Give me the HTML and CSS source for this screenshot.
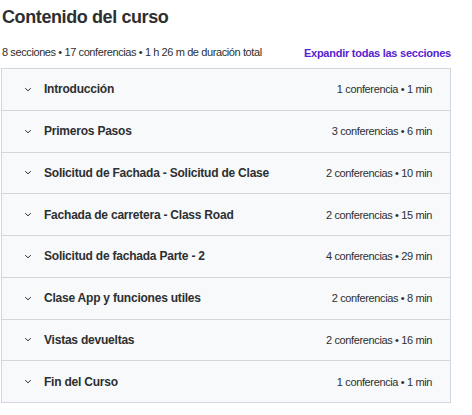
FILE: index.html
```html
<!DOCTYPE html>
<html lang="es">
<head>
<meta charset="utf-8">
<link rel="stylesheet" href="styles.css">
</head>
<body>
<div class="page">
  <h2 class="title">Contenido del curso</h2>
  <div class="meta-row">
    <span class="meta">8 secciones • 17 conferencias • 1 h 26 m de duración total</span>
    <span class="expand">Expandir todas las secciones</span>
  </div>
  <div class="sections">
    <div class="section"><span class="chev"><svg width="8" height="5" viewBox="0 0 8 5"><path d="M1.2 1.2l2.8 2.6 2.8-2.6" fill="none" stroke="#2d2f31" stroke-width="1"/></svg></span><span class="name">Introducción</span><span class="info">1 conferencia • 1 min</span></div>
    <div class="section"><span class="chev"><svg width="8" height="5" viewBox="0 0 8 5"><path d="M1.2 1.2l2.8 2.6 2.8-2.6" fill="none" stroke="#2d2f31" stroke-width="1"/></svg></span><span class="name">Primeros Pasos</span><span class="info">3 conferencias • 6 min</span></div>
    <div class="section"><span class="chev"><svg width="8" height="5" viewBox="0 0 8 5"><path d="M1.2 1.2l2.8 2.6 2.8-2.6" fill="none" stroke="#2d2f31" stroke-width="1"/></svg></span><span class="name">Solicitud de Fachada - Solicitud de Clase</span><span class="info">2 conferencias • 10 min</span></div>
    <div class="section"><span class="chev"><svg width="8" height="5" viewBox="0 0 8 5"><path d="M1.2 1.2l2.8 2.6 2.8-2.6" fill="none" stroke="#2d2f31" stroke-width="1"/></svg></span><span class="name">Fachada de carretera - Class Road</span><span class="info">2 conferencias • 15 min</span></div>
    <div class="section"><span class="chev"><svg width="8" height="5" viewBox="0 0 8 5"><path d="M1.2 1.2l2.8 2.6 2.8-2.6" fill="none" stroke="#2d2f31" stroke-width="1"/></svg></span><span class="name">Solicitud de fachada Parte - 2</span><span class="info">4 conferencias • 29 min</span></div>
    <div class="section"><span class="chev"><svg width="8" height="5" viewBox="0 0 8 5"><path d="M1.2 1.2l2.8 2.6 2.8-2.6" fill="none" stroke="#2d2f31" stroke-width="1"/></svg></span><span class="name">Clase App y funciones utiles</span><span class="info">2 conferencias • 8 min</span></div>
    <div class="section"><span class="chev"><svg width="8" height="5" viewBox="0 0 8 5"><path d="M1.2 1.2l2.8 2.6 2.8-2.6" fill="none" stroke="#2d2f31" stroke-width="1"/></svg></span><span class="name">Vistas devueltas</span><span class="info">2 conferencias • 16 min</span></div>
    <div class="section"><span class="chev"><svg width="8" height="5" viewBox="0 0 8 5"><path d="M1.2 1.2l2.8 2.6 2.8-2.6" fill="none" stroke="#2d2f31" stroke-width="1"/></svg></span><span class="name">Fin del Curso</span><span class="info">1 conferencia • 1 min</span></div>
  </div>
</div>
</body>
</html>
```
FILE: styles.css
```css
html, body {
  margin: 0;
  padding: 0;
  background: #ffffff;
}
body {
  font-family: "Liberation Sans", Arial, sans-serif;
  color: #2d2f31;
}
.page {
  width: 450px;
  padding-left: 1px;
}
.title {
  margin: 0;
  padding: 6px 0 0 1px;
  font-size: 18px;
  line-height: 22px;
  font-weight: 700;
  letter-spacing: -0.4px;
  color: #2d2f31;
}
.meta-row {
  display: flex;
  justify-content: space-between;
  align-items: flex-end;
  margin-top: 16px;
  height: 20px;
  padding-left: 1px;
}
.meta {
  font-size: 11px;
  line-height: 14px;
  margin-bottom: 5px;
  letter-spacing: -0.4px;
}
.expand {
  font-size: 11px;
  line-height: 14px;
  font-weight: 700;
  letter-spacing: -0.25px;
  color: #5624d0;
  margin-bottom: 4px;
}
.sections {
  margin-top: 4px;
  border: 1px solid #d1d7dc;
  background: #f7f9fa;
}
.section {
  display: flex;
  align-items: center;
  height: 41.75px;
  box-sizing: border-box;
  border-top: 1px solid #d1d7dc;
  padding: 0 18px 0 22px;
}
.section:first-child {
  border-top: none;
  height: 40.75px;
}
.chev {
  display: flex;
  width: 20px;
}
.name {
  flex: 1;
  font-size: 12px;
  font-weight: 700;
  letter-spacing: -0.22px;
}
.info {
  font-size: 11px;
  letter-spacing: -0.37px;
}
```
